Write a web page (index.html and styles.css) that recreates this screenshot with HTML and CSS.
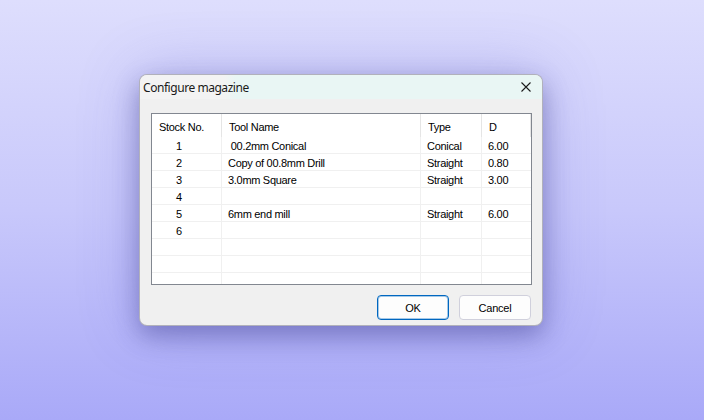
FILE: index.html
```html
<!DOCTYPE html>
<html lang="en">
<head>
    <meta charset="UTF-8">
    <meta name="viewport" content="width=device-width, initial-scale=1.0">
    <title>Configure magazine</title>
    <link rel="stylesheet" href="styles.css">
</head>
<body>
    <div class="dialog">
        <!-- Barra de titulo -->
        <div class="titlebar">
            <span class="title">Configure magazine</span>
            <svg class="close" width="10" height="10" viewBox="0 0 10 10">
                <path d="M0.5 0.5 L9.5 9.5 M9.5 0.5 L0.5 9.5" stroke="#1b1b1b" stroke-width="1.1" fill="none"/>
            </svg>
        </div>

        <div class="client">
            <div class="list">
                <table>
                    <colgroup>
                        <col style="width:70px">
                        <col style="width:199px">
                        <col style="width:61px">
                        <col style="width:49px">
                    </colgroup>
                    <thead>
                        <tr>
                            <th class="stock">Stock No.</th>
                            <th>Tool Name</th>
                            <th>Type</th>
                            <th>D</th>
                        </tr>
                    </thead>
                    <tbody>
                        <tr><td class="num">1</td><td>&nbsp;00.2mm Conical</td><td>Conical</td><td>6.00</td></tr>
                        <tr><td class="num">2</td><td>Copy of 00.8mm Drill</td><td>Straight</td><td>0.80</td></tr>
                        <tr><td class="num">3</td><td>3.0mm Square</td><td>Straight</td><td>3.00</td></tr>
                        <tr><td class="num">4</td><td></td><td></td><td></td></tr>
                        <tr><td class="num">5</td><td>6mm end mill</td><td>Straight</td><td>6.00</td></tr>
                        <tr><td class="num">6</td><td></td><td></td><td></td></tr>
                        <tr><td class="num"></td><td></td><td></td><td></td></tr>
                        <tr><td class="num"></td><td></td><td></td><td></td></tr>
                        <tr><td class="num"></td><td></td><td></td><td></td></tr>
                    </tbody>
                </table>
            </div>

            <div class="buttons">
                <button class="btn btn-default">OK</button>
                <button class="btn">Cancel</button>
            </div>
        </div>
    </div>
</body>
</html>
```

FILE: styles.css
```css
html, body {
    margin: 0;
    height: 100%;
}

body {
    background: linear-gradient(to bottom, #dedefd 0%, #c8c8fb 50%, #a9a9f8 100%);
    padding: 74px 0 0 139px;
    box-sizing: border-box;
    font-family: "Liberation Sans", Arial, sans-serif;
    font-size: 11px;
    color: #000;
}

.dialog {
    width: 404px;
    box-sizing: border-box;
    border: 1px solid rgba(60, 60, 90, 0.35);
    border-radius: 8px;
    overflow: hidden;
    background: #f0f0f0;
    box-shadow: 0 10px 24px rgba(50, 50, 130, 0.4), 0 0 60px rgba(90, 90, 200, 0.3);
}

.titlebar {
    height: 24px;
    display: flex;
    align-items: center;
    justify-content: space-between;
    padding: 0 11px 0 3px;
    background: linear-gradient(to right, #f3f3f3 0, #f3f3f3 84px, #e9f6f4 96px, #e9f6f4 100%);
}

.title {
    font-family: "Noto Sans", "Open Sans", sans-serif;
    font-size: 12px;
    letter-spacing: -0.45px;
    color: #1a1a1a;
    padding-top: 1px;
}

.close {
    display: block;
}

.client {
    padding: 14px 10px 5px 11px;
}

/* Lista de ferramentas */
.list {
    height: 170px;
    border: 1px solid #828790;
    background: #fff;
    overflow: hidden;
}

table {
    width: 379px;
    table-layout: fixed;
    border-collapse: separate;
    border-spacing: 0;
    letter-spacing: -0.3px;
}

th {
    box-sizing: border-box;
    height: 23px;
    padding: 2px 0 0 7px;
    font-weight: normal;
    text-align: left;
    border-right: 1px solid #e5e5e5;
}

td {
    box-sizing: border-box;
    height: 17px;
    padding: 3px 0 0 6px;
    line-height: 13px;
    vertical-align: top;
    white-space: pre;
    border-bottom: 1px solid #f0f0f0;
    border-right: 1px solid #f0f0f0;
}

td:last-child {
    border-right: none;
}

td.num {
    padding-left: 24px;
}

.buttons {
    display: flex;
    justify-content: flex-end;
    gap: 10px;
    margin-top: 10px;
    padding-right: 1px;
}

.btn {
    width: 72px;
    height: 25px;
    background: #fdfdfd;
    border: 1px solid #d0d0dc;
    border-radius: 4px;
    font-family: "Liberation Sans", Arial, sans-serif;
    font-size: 11px;
    letter-spacing: -0.2px;
    color: #000;
    padding: 0;
}

.btn-default {
    border-color: #0067c0;
    box-shadow: inset 0 0 0 1px rgba(0, 103, 192, 0.35);
}
```
